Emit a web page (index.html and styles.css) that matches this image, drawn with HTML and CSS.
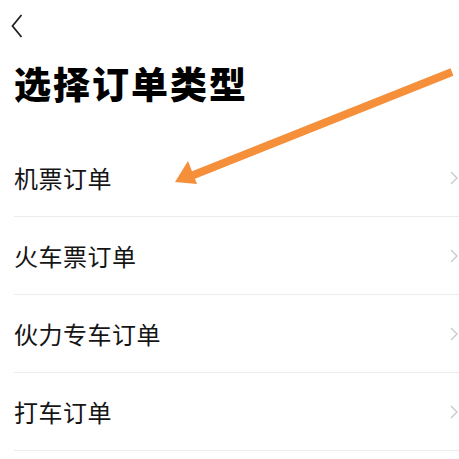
FILE: index.html
```html
<!DOCTYPE html>
<html lang="zh">
<head>
    <meta charset="UTF-8">
    <meta name="viewport" content="width=device-width, initial-scale=1.0">
    <title>选择订单类型</title>
    <link rel="stylesheet" href="styles.css">
</head>
<body>
    <div class="page">
        <header class="nav">
            <svg class="back" width="12" height="24" viewBox="0 0 12 24">
                <polyline points="10.5,1 1.5,12 10.5,23" fill="none" stroke="#222" stroke-width="1.8"/>
            </svg>
        </header>

        <h1 class="main-title">选择订单类型</h1>

        <ul class="order-list">
            <li class="order-item"><span>机票订单</span><svg class="chev" width="8" height="14" viewBox="0 0 8 14"><polyline points="1,1 7,7 1,13" fill="none" stroke="#c9c9c9" stroke-width="1.4"/></svg></li>
            <li class="order-item"><span>火车票订单</span><svg class="chev" width="8" height="14" viewBox="0 0 8 14"><polyline points="1,1 7,7 1,13" fill="none" stroke="#c9c9c9" stroke-width="1.4"/></svg></li>
            <li class="order-item"><span>伙力专车订单</span><svg class="chev" width="8" height="14" viewBox="0 0 8 14"><polyline points="1,1 7,7 1,13" fill="none" stroke="#c9c9c9" stroke-width="1.4"/></svg></li>
            <li class="order-item"><span>打车订单</span><svg class="chev" width="8" height="14" viewBox="0 0 8 14"><polyline points="1,1 7,7 1,13" fill="none" stroke="#c9c9c9" stroke-width="1.4"/></svg></li>
        </ul>

        <!-- annotation arrow drawn over the page -->
        <svg class="arrow" width="459" height="459" viewBox="0 0 459 459">
            <line x1="452" y1="72" x2="186" y2="178" stroke="#f68f3a" stroke-width="8" stroke-linecap="butt"/>
            <polygon points="175,182 188,161 197,184" fill="#f68f3a"/>
        </svg>
    </div>
</body>
</html>
```

FILE: styles.css
```css
/* styles.css */

body {
    margin: 0;
    padding: 0;
    background-color: #ffffff;
    font-family: "Noto Sans CJK SC", "Noto Sans", sans-serif;
    color: #111111;
    overflow: hidden;
}

.page {
    position: relative;
    width: 459px;
    height: 459px;
}

.nav {
    height: 52px;
    padding: 14px 0 0 11px;
    box-sizing: border-box;
}

.back {
    display: block;
}

.main-title {
    margin: 9px 0 0 14px;
    font-size: 37px;
    font-weight: 900;
    line-height: 44px;
    letter-spacing: 2px;
    color: #000000;
}

.order-list {
    list-style: none;
    margin: 34px 0 0 14px;
    padding: 0;
}

.order-item {
    display: flex;
    align-items: center;
    justify-content: space-between;
    height: 77px;
    border-bottom: 1px solid #ececec;
    font-size: 24px;
    letter-spacing: 0.5px;
    color: #151515;
}

.chev {
    margin-right: 1px;
}

.arrow {
    position: absolute;
    left: 0;
    top: 0;
    pointer-events: none;
}
```
